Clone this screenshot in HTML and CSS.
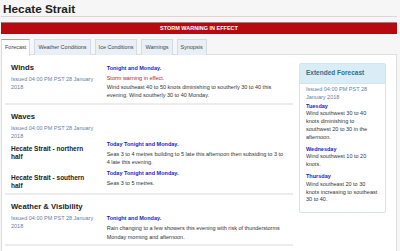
FILE: index.html
```html
<!DOCTYPE html>
<html lang="en">
<head>
    <meta charset="UTF-8">
    <title>Hecate Strait</title>
    <link rel="stylesheet" href="styles.css">
</head>
<body>
<div class="wrap">
    <h1 class="title">Hecate Strait</h1>
    <div class="banner">Storm warning in effect</div>

    <ul class="tabs">
        <li class="on">Forecast</li>
        <li>Weather Conditions</li>
        <li>Ice Conditions</li>
        <li>Warnings</li>
        <li>Synopsis</li>
    </ul>

    <div class="panel">
        <div class="main">
            <!-- winds -->
            <div class="section">
                <div class="row">
                    <div class="side">
                        <h2>Winds</h2>
                        <p class="issued">Issued 04:00 PM PST 28 January 2018</p>
                    </div>
                    <div class="text">
                        <p class="when">Tonight and Monday.</p>
                        <p class="warn">Storm warning in effect.</p>
                        <p>Wind southeast 40 to 50 knots diminishing to southerly 30 to 40 this evening. Wind southerly 30 to 40 Monday.</p>
                    </div>
                </div>
            </div>

            <!-- waves -->
            <div class="section">
                <h2>Waves</h2>
                <p class="issued side">Issued 04:00 PM PST 28 January 2018</p>
                <div class="row sub">
                    <h3 class="side">Hecate Strait - northern half</h3>
                    <div class="text">
                        <p class="when">Today Tonight and Monday.</p>
                        <p>Seas 3 to 4 metres building to 5 late this afternoon then subsiding to 3 to 4 late this evening.</p>
                    </div>
                </div>
                <div class="row sub">
                    <h3 class="side">Hecate Strait - southern half</h3>
                    <div class="text">
                        <p class="when">Today Tonight and Monday.</p>
                        <p>Seas 3 to 5 metres.</p>
                    </div>
                </div>
            </div>

            <!-- weather -->
            <div class="section">
                <div class="row">
                    <div class="side">
                        <h2>Weather &amp; Visibility</h2>
                        <p class="issued">Issued 04:00 PM PST 28 January 2018</p>
                    </div>
                    <div class="text low">
                        <p class="when">Tonight and Monday.</p>
                        <p>Rain changing to a few showers this evening with risk of thunderstorms Monday morning and afternoon.</p>
                    </div>
                </div>
            </div>
        </div>

        <div class="aside">
            <div class="aside-hd">Extended Forecast</div>
            <div class="aside-bd">
                <p class="issued">Issued 04:00 PM PST 28 January 2018</p>
                <p class="day">Tuesday</p>
                <p>Wind southwest 30 to 40 knots diminishing to southwest 20 to 30 in the afternoon.</p>
                <p class="day">Wednesday</p>
                <p>Wind southwest 10 to 20 knots.</p>
                <p class="day">Thursday</p>
                <p>Wind southeast 20 to 30 knots increasing to southeast 30 to 40.</p>
            </div>
        </div>
    </div>
</div>
</body>
</html>
```

FILE: styles.css
```css
* { margin: 0; padding: 0; }
li { list-style: none; }
body { background-color: #f6f6f6; font-family: "Liberation Sans", Arial, sans-serif; color: #333; font-size: 5.5px; line-height: 8.4px; }
.wrap { margin: 0 3px 0 1px; }

/*标题*/
.title { font-size: 11.8px; line-height: 14px; color: #222; padding: 2px 0 0 2px; height: 14px; border-bottom: 1px solid #e6d2d2; }
.banner { margin-top: 5px; height: 11px; line-height: 11px; border-top: 1px solid #8a8a8a; background-color: #b60a10; color: #fff; font-weight: bold; text-transform: uppercase; text-align: center; }

/*标签*/
.tabs { display: flex; margin-top: 5px; height: 16px; }
.tabs li { margin-right: 4px; padding: 0 3px; height: 15px; line-height: 15px; border: 1px solid #d3dbe4; border-bottom: none; background-color: #e9eff6; color: #444; }
.tabs li.on { background-color: #fff; border-color: #dcdcdc; border-top-color: #a5a5a5; height: 16px; position: relative; z-index: 1; }

/*内容*/
.panel { display: flex; align-items: flex-start; margin-top: -1px; border: 1px solid #dedede; background-color: #fff; padding: 1px 0 0 3px; height: 200px; }
.main { width: 288px; }
.section { padding: 7px 6px 3px; border-bottom: 2px solid #ececec; }
.section h2 { font-size: 7.7px; line-height: 10px; color: #222; margin-bottom: 2px; }
.row { display: flex; }
.side { width: 84px; margin-right: 12px; }
.text { width: 181px; padding-top: 1px; }
.text.low { padding-top: 12px; }
.sub .text { padding-top: 0; margin-bottom: 2px; }
.sub h3 { font-size: 6.5px; line-height: 8px; color: #222; margin-top: 5px; }
.issued { color: #5d7fa6; line-height: 8px; }
.when { color: #1c1cc8; font-weight: bold; margin-bottom: 2px; }
.warn { color: #a8282a; }

/*扩展预报*/
.aside { width: 85px; margin: 7px 0 0 6px; border: 1px solid #cfe6ef; border-radius: 2px; }
.aside-hd { padding: 4px 6px 5px; line-height: 10px; font-size: 6.5px; font-weight: bold; color: #31708f; background-color: #d9edf7; border-bottom: 1px solid #cfe6ef; }
.aside-bd { padding: 2px 6px 4px; line-height: 7.8px; }
.aside-bd p { margin-bottom: 4px; }
.aside-bd .issued { line-height: 7.8px; margin-bottom: 1px; }
.aside-bd .day { color: #1c1cc8; font-weight: bold; margin-bottom: 0; }
```
